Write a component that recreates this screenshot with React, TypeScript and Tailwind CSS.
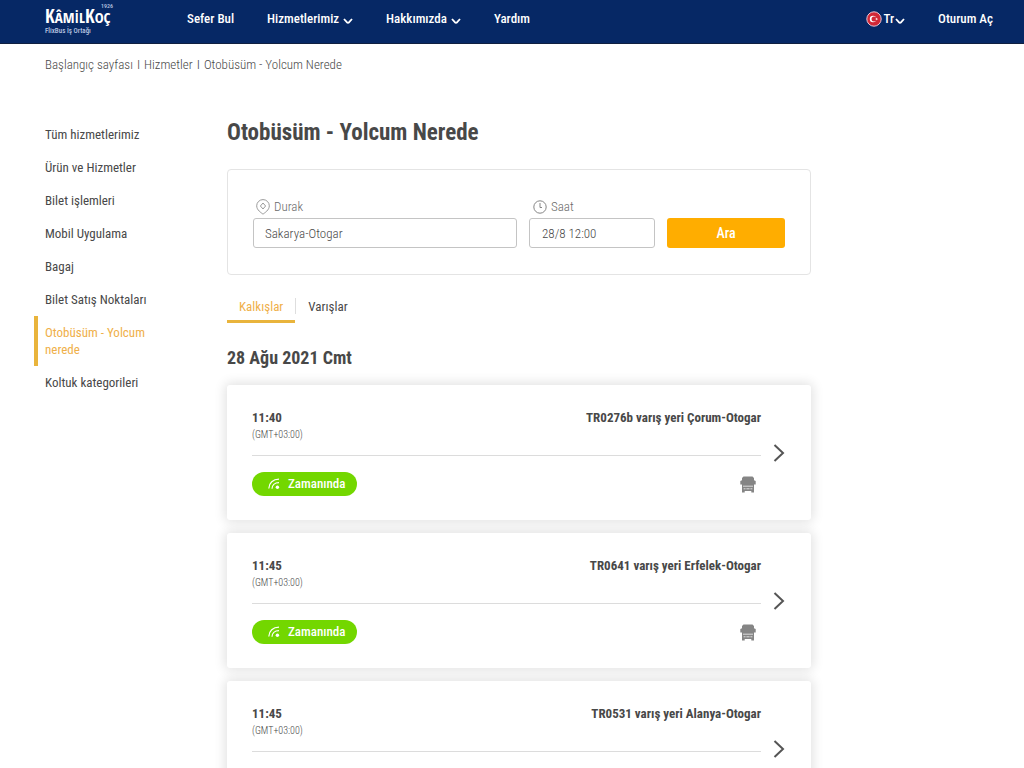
import { useState } from "react";

type Departure = { time: string; code: string; destination: string };

const departures: Departure[] = [
  { time: "11:40", code: "TR0276b", destination: "Çorum-Otogar" },
  { time: "11:45", code: "TR0641", destination: "Erfelek-Otogar" },
  { time: "11:45", code: "TR0531", destination: "Alanya-Otogar" },
];

const services = [
  "Tüm hizmetlerimiz",
  "Ürün ve Hizmetler",
  "Bilet işlemleri",
  "Mobil Uygulama",
  "Bagaj",
  "Bilet Satış Noktaları",
  "Otobüsüm - Yolcum nerede",
  "Koltuk kategorileri",
];

function ChevronDown() {
  return (
    <svg viewBox="0 0 10 6" className="mt-1 h-[6px] w-[10px]" fill="none" stroke="currentColor" strokeWidth="1.8" aria-hidden="true">
      <path d="M1 1 L3.8 4.2 Q5 5.2 6.2 4.2 L9 1" />
    </svg>
  );
}

function ChevronRight() {
  return (
    <svg viewBox="0 0 12 18" className="h-[18px] w-3" fill="none" stroke="#555" strokeWidth="2" aria-hidden="true">
      <path d="M1.5 1 L10 9 L1.5 17" />
    </svg>
  );
}

function Pin() {
  return (
    <svg viewBox="0 0 14 16" className="h-4 w-[14px]" fill="none" stroke="#9a9a9a" aria-hidden="true">
      <path d="M7 15.2 C5.2 13.6 0.7 11.2 0.7 6.8 A6.3 6.2 0 0 1 13.3 6.8 C13.3 11.2 8.8 13.6 7 15.2Z" />
      <path d="M7 4 L9.6 7 L7 10 L4.4 7Z" />
    </svg>
  );
}

function Clock() {
  return (
    <svg viewBox="0 0 14 14" className="h-[14px] w-[14px]" fill="none" stroke="#858585" aria-hidden="true">
      <circle cx="7" cy="7" r="6.2" />
      <path d="M7 3 V7.5 H9" />
    </svg>
  );
}

function Signal() {
  return (
    <svg viewBox="0 0 12 12" className="h-3 w-3" fill="none" stroke="#fff" strokeWidth="1.2" aria-hidden="true">
      <path d="M0.8 10.5 C1 5 5 1.2 11 1.2" />
      <path d="M4 10.8 C4 7.4 6.6 4.6 11 4.6" />
      <circle cx="9.4" cy="9.2" r="1.7" fill="#fff" stroke="none" />
    </svg>
  );
}

function Bus() {
  return (
    <svg viewBox="0 0 16 17" className="h-[17px] w-4" fill="#858585" aria-hidden="true">
      <path d="M3.5 0.5 H12.5 L14 2 V4.3 L15.7 5 V8.5 H14 V16.5 H11.3 V15 H4.7 V16.5 H2 V8.5 H0.3 V5 L2 4.3 V2Z" />
      <path d="M3 10.2 H13 M3.6 12.8 H5.6 M10.4 12.8 H12.4 M6.4 12.8 H9.6" stroke="#e8e8e8" strokeWidth="0.9" />
    </svg>
  );
}

function Flag() {
  return (
    <svg viewBox="0 0 16 16" className="h-4 w-4" aria-hidden="true">
      <circle cx="8" cy="8" r="7.2" fill="#d22836" stroke="#e6c3d2" strokeWidth="1" />
      <circle cx="7" cy="8" r="3.2" fill="#fff" />
      <circle cx="8" cy="8" r="2.5" fill="#d22836" />
      <path d="M9 8 L10.3 7.6 L11 6.4 L11.1 7.8 L12.3 8 L11.1 8.4 L11 9.6 L10.3 8.5Z" fill="#fff" />
    </svg>
  );
}

function Logo() {
  return (
    <a href="#" className="flex w-[76px] flex-col text-white">
      <span className="pr-2 text-right text-[6px] leading-[6px] text-[#b9c6e0]">1926</span>
      <span className="font-['Open_Sans_Condensed','Roboto_Condensed','Liberation_Sans_Narrow',sans-serif] text-[19px] leading-[14px] font-bold whitespace-nowrap">
        K<span className="text-[15px]">ÂMİL</span>K<span className="text-[15px]">OÇ</span>
      </span>
      <span className="mt-[3px] text-[7px] leading-2 text-[#b9c6e0]">FlixBus İş Ortağı</span>
    </a>
  );
}

function Card({ time, code, destination }: Departure) {
  return (
    <li className="flex items-center rounded-[3px] bg-white py-6 pr-[26px] pl-[25px] shadow-[0_0_12px_2px_rgba(0,0,0,0.12)]">
      <div className="flex-1">
        <div className="flex justify-between border-b border-[#dcdcdc] pb-3 text-[13px] leading-[18px] font-bold">
          <div>
            <div>{time}</div>
            <div className="text-[10px] leading-4 font-light">(GMT+03:00)</div>
          </div>
          <div>{code} varış yeri {destination}</div>
        </div>
        <div className="flex items-center justify-between pt-4 pr-[5px]">
          <span className="flex h-6 items-center gap-2 rounded-full bg-[#73d700] pr-3 pl-4 text-[13px] font-medium text-white">
            <Signal />
            Zamanında
          </span>
          <Bus />
        </div>
      </div>
      <a href="#" aria-label={`${code} ayrıntıları`} className="ml-3">
        <ChevronRight />
      </a>
    </li>
  );
}

export default function App() {
  const [tab, setTab] = useState("Kalkışlar");
  return (
    <div className="min-h-screen bg-white pb-8 font-['Roboto_Condensed','Liberation_Sans_Narrow',sans-serif] text-[#484848]">
      <header className="flex h-11 items-center border-b border-[#102040] bg-[#062865] pr-[31px] pb-[6px] pl-[45px] text-[13px] font-medium text-white">
        <Logo />
        <nav className="ml-[66px] flex flex-1 items-center gap-[33px]">
          <a href="#">Sefer Bul</a>
          <button type="button" className="flex items-center gap-1">Hizmetlerimiz <ChevronDown /></button>
          <button type="button" className="flex items-center gap-1">Hakkımızda <ChevronDown /></button>
          <a href="#">Yardım</a>
        </nav>
        <button type="button" className="mr-[33px] flex items-center gap-px">
          <Flag />
          Tr
          <ChevronDown />
        </button>
        <a href="#">Oturum Aç</a>
      </header>

      <nav aria-label="Sayfa yolu" className="flex gap-1 pt-3 pl-[45px] text-[13px] leading-[18px] font-light">
        <a href="#">Başlangıç sayfası</a>
        <span>I</span>
        <a href="#">Hizmetler</a>
        <span>I</span>
        <span>Otobüsüm - Yolcum Nerede</span>
      </nav>

      <div className="flex pt-11 pr-[213px] pl-[34px]">
        <aside className="w-[193px] shrink-0">
          <ul className="text-[13px] leading-[17px]">
            {services.map((item, i) => (
              <li key={item} className={i === 6 ? "border-l-4 border-[#e9b43c] py-2 pr-16 pl-[7px] text-[#efb04a]" : "py-2 pl-[11px]"}>
                <a href="#">{item}</a>
              </li>
            ))}
          </ul>
        </aside>

        <main className="min-w-0 flex-1">
          <h1 className="text-[23px] leading-[30px] font-bold">Otobüsüm - Yolcum Nerede</h1>
          <form onSubmit={(e) => e.preventDefault()} className="mt-[21px] flex items-end rounded-[4px] border border-[#e4e4e4] px-[25px] pt-7 pb-[26px] text-[13px]">
            <div className="flex-1">
              <label htmlFor="stop" className="flex items-center gap-1 pb-[2px] pl-[3px] leading-[18px] font-light text-[#6a6a6a]"><Pin />Durak</label>
              <input id="stop" defaultValue="Sakarya-Otogar" className="h-[30px] w-full rounded-[3px] border border-[#c4c4c4] px-[11px] font-light" />
            </div>
            <div className="ml-3 w-[126px]">
              <label htmlFor="time" className="flex items-center gap-1 pb-[2px] pl-1 leading-[18px] font-light text-[#6a6a6a]"><Clock />Saat</label>
              <input id="time" defaultValue="28/8 12:00" className="h-[30px] w-full rounded-[3px] border border-[#c4c4c4] px-3 font-light" />
            </div>
            <button type="submit" className="ml-3 h-[30px] w-[118px] rounded-[3px] bg-[#ffad00] text-[14px] font-medium text-white">Ara</button>
          </form>

          <div role="tablist" className="mt-[19px] flex items-start text-[13px] leading-[18px]">
            <button
              type="button"
              role="tab"
              aria-selected={tab === "Kalkışlar"}
              onClick={() => setTab("Kalkışlar")}
              className={tab === "Kalkışlar" ? "border-b-3 border-[#e9b43c] px-3 pt-1 pb-1 text-[#efb04a]" : "border-b-3 border-transparent px-3 pt-1 pb-1"}
            >
              Kalkışlar
            </button>
            <span className="mt-1 h-4 w-px bg-[#dedede]" />
            <button
              type="button"
              role="tab"
              aria-selected={tab === "Varışlar"}
              onClick={() => setTab("Varışlar")}
              className={tab === "Varışlar" ? "border-b-3 border-[#e9b43c] px-3 pt-1 pb-1 text-[#efb04a]" : "border-b-3 border-transparent px-3 pt-1 pb-1"}
            >
              Varışlar
            </button>
          </div>

          <h2 className="mt-[23px] text-[18px] leading-6 font-bold">28 Ağu 2021 Cmt</h2>
          <ul className="mt-[15px] flex flex-col gap-[13px]">
            {departures.map((d) => (
              <Card key={d.code} {...d} />
            ))}
          </ul>
        </main>
      </div>
    </div>
  );
}
